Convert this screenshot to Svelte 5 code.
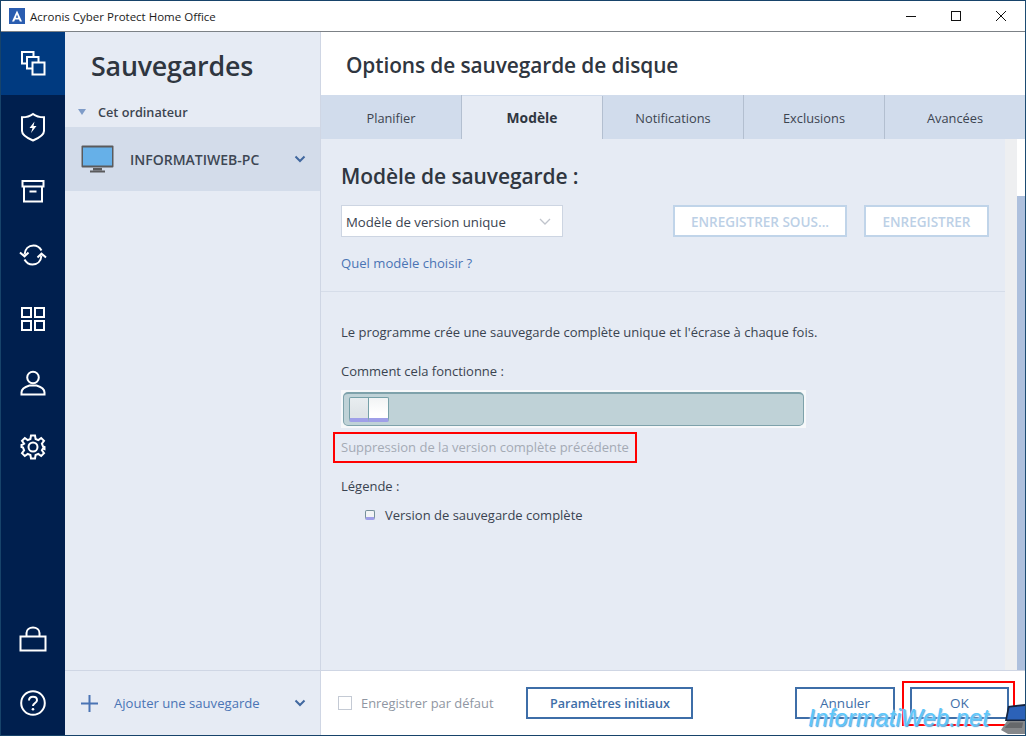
<script>
  const tabs = ["Planifier", "Modèle", "Notifications", "Exclusions", "Avancées"];
  let active = "Modèle";
</script>

<div class="window">
  <header class="titlebar">
    <svg class="logo" width="16" height="16" viewBox="0 0 16 16">
      <rect width="16" height="16" fill="#2a5db0" />
      <path d="M8 2.5 L13 13.5 H10.8 L10 11.5 H6 L5.2 13.5 H3 Z M8 6.5 L6.8 9.7 H9.2 Z" fill="#fff" fill-rule="evenodd" />
    </svg>
    <span class="app-title">Acronis Cyber Protect Home Office</span>
    <div class="win-buttons">
      <svg width="12" height="12" viewBox="0 0 12 12"><path d="M1 6.5H11" stroke="#111" /></svg>
      <svg width="12" height="12" viewBox="0 0 12 12"><rect x="1.5" y="1.5" width="9" height="9" fill="none" stroke="#111" /></svg>
      <svg width="12" height="12" viewBox="0 0 12 12"><path d="M1 1L11 11M11 1L1 11" stroke="#111" /></svg>
    </div>
  </header>

  <div class="body">
    <nav class="rail">
      <div class="rail-item current">
        <svg viewBox="0 0 26 26"><path d="M6.500 13.500H2V2H13.500V6.500M12.500 18.500H7V7H18.500V12.500" /><rect x="12.500" y="12.500" width="12" height="12" /></svg>
      </div>
      <div class="rail-item">
        <svg class="tall" viewBox="0 0 26 30"><path d="M13 2C9.500 4.800 6 5.300 2 5.300V19C2 23 7 26 13 28.500C19 26 24 23 24 19V5.300C20 5.300 16.500 4.800 13 2Z" /><path class="fill" d="M14.500 9.500L9.500 16H12.500L11 21L16.500 14H13.500Z" /></svg>
      </div>
      <div class="rail-item">
        <svg viewBox="0 0 26 26"><path d="M2.500 3H23.500V8.500H2.500ZM4 8.500V23.500H22V8.500M9.500 13.500H16.500" /></svg>
      </div>
      <div class="rail-item">
        <svg class="wide" viewBox="0 0 28 26"><path d="M5.500 12.500C6 7 9.500 3.500 14.500 3.500C18 3.500 20.500 5 22.500 8.500M22.500 13.500C22 19 18.500 22.500 13.500 22.500C10 22.500 7.500 21 5.500 17.500M1 10.500L5.500 14.500L9.500 10.500M18.500 15.500L22.500 11.500L27 15.500" /></svg>
      </div>
      <div class="rail-item">
        <svg viewBox="0 0 26 26"><rect x="2" y="2" width="9" height="9" /><rect x="15" y="2" width="9" height="9" /><rect x="2" y="15" width="9" height="9" /><rect x="15" y="15" width="9" height="9" /></svg>
      </div>
      <div class="rail-item">
        <svg viewBox="0 0 26 26"><circle cx="13" cy="7.500" r="5.800" /><path d="M1.500 24.500V22.500C1.500 18.500 6 16.500 9.500 15.500H16.500C20 16.500 24.500 18.500 24.500 22.500V24.500Z" /></svg>
      </div>
      <div class="rail-item">
        <svg viewBox="0 0 26 26"><circle cx="13" cy="13" r="4.500" /><path d="M11 1.500H15L15.600 5L18.300 6.100L21.200 4L24 6.800L21.900 9.700L23 12.400L24.500 13V15L23 14.500L21.900 16.300L24 19.200L21.200 22L18.300 19.900L15.600 21L15 24.500H11L10.400 21L7.700 19.900L4.800 22L2 19.200L4.100 16.300L3 13.600L1.500 13V11L3 10.400L4.100 9.700L2 6.800L4.800 4L7.700 6.100L10.400 5Z" /></svg>
      </div>
      <div class="rail-spacer"></div>
      <div class="rail-item">
        <svg class="wide" viewBox="0 0 28 26"><path d="M1.500 10.500H26.500V24.500H1.500ZM7.500 10.500V7C7.500 3.500 10.500 1.500 14 1.500C17.500 1.500 20.500 3.500 20.500 7V10.500" /></svg>
      </div>
      <div class="rail-item">
        <svg viewBox="0 0 26 26"><circle cx="13" cy="13" r="11.800" /><path d="M9 10.500C9 8 10.800 6.800 13 6.800C15.300 6.800 17 8.200 17 10.200C17 13 13 13 13 16" /><circle class="fill" cx="13" cy="19.300" r="1.300" /></svg>
      </div>
    </nav>

    <aside class="panel">
      <h1>Sauvegardes</h1>
      <div class="group"><span class="tri"></span>Cet ordinateur</div>
      <div class="machine">
        <svg class="monitor" width="33" height="28" viewBox="0 0 33 28">
          <rect x="0.500" y="0.500" width="32" height="22" rx="1" fill="#5a5a5c" />
          <rect x="2" y="2.500" width="29" height="18" fill="#66b0e8" />
          <rect x="12" y="23" width="9" height="2.500" fill="#5a5a5c" />
          <rect x="9" y="25.500" width="15" height="2" fill="#5a5a5c" />
        </svg>
        <span class="machine-name">INFORMATIWEB-PC</span>
        <svg class="chev" width="12" height="8" viewBox="0 0 12 8"><path d="M1.500 1.500L6 6L10.500 1.500" /></svg>
      </div>
      <div class="panel-spacer"></div>
      <div class="add">
        <svg class="plus" width="17" height="17" viewBox="0 0 17 17"><path d="M8.500 0V17M0 8.500H17" /></svg>
        <span>Ajouter une sauvegarde</span>
        <svg class="chev" width="12" height="8" viewBox="0 0 12 8"><path d="M1.500 1.500L6 6L10.500 1.500" /></svg>
      </div>
    </aside>

    <main class="main">
      <h2>Options de sauvegarde de disque</h2>
      <div class="tabs">
        {#each tabs as tab}
          <div class="tab" class:on={tab === active}>{tab}</div>
        {/each}
      </div>

      <div class="scroll-area">
        <div class="content">
          <section class="top">
            <h3>Modèle de sauvegarde :</h3>
            <div class="row">
              <div class="select">
                <span>Modèle de version unique</span>
                <svg width="12" height="7" viewBox="0 0 12 7"><path d="M1 1L6 6L11 1" /></svg>
              </div>
              <button class="ghost save-as" disabled>ENREGISTRER SOUS...</button>
              <button class="ghost save" disabled>ENREGISTRER</button>
            </div>
            <a class="link" href="#top">Quel modèle choisir ?</a>
          </section>
          <section class="desc">
            <p class="summary">Le programme crée une sauvegarde complète unique et l'écrase à chaque fois.</p>
            <p class="how">Comment cela fonctionne :</p>
            <div class="demo">
              <div class="track">
                <span class="block"></span><span class="block light"></span>
              </div>
            </div>
            <div class="caption-wrap"><span class="caption">Suppression de la version complète précédente</span></div>
            <p class="legend">Légende :</p>
            <div class="legend-row"><span class="swatch"></span>Version de sauvegarde complète</div>
          </section>
        </div>
        <div class="gutter"></div>
        <div class="scrollbar"><div class="thumb"></div></div>
      </div>

      <footer class="footer">
        <span class="check"></span>
        <span class="check-label">Enregistrer par défaut</span>
        <button class="outline initial">Paramètres initiaux</button>
        <div class="footer-spacer"></div>
        <button class="outline cancel">Annuler</button>
        <button class="outline ok">OK</button>
      </footer>
    </main>
  </div>

  <!-- annotations over the screenshot -->
  <div class="mark-ok"></div>
  <div class="watermark">InformatiWeb.net</div>
  <svg class="laptop" width="24" height="31" viewBox="0 0 24 31">
    <path d="M7 2L24 0V17H4Z" fill="#15243f" />
    <path d="M8.500 3.500L24 2V15.500H6Z" fill="#2c62b8" />
    <path d="M0 26L6 17H24V30H7Z" fill="#85878a" />
    <path d="M5 22L9 18.500H22L21 24H4Z" fill="#66686b" />
  </svg>
</div>

<style>
  :global(body) {
    margin: 0;
    background: #fff;
  }

  .window {
    position: relative;
    width: 1026px;
    height: 736px;
    box-sizing: border-box;
    border: 1px solid #17436a;
    border-right-color: #1d4c72;
    display: flex;
    flex-direction: column;
    overflow: hidden;
    font-family: "Open Sans", "Noto Sans", sans-serif;
    color: #2f3640;
  }

  .titlebar {
    height: 30px;
    flex: none;
    box-sizing: content-box;
    display: flex;
    align-items: center;
    padding-left: 8px;
    background: #fff;
    border-bottom: 1px solid #7c8186;
    margin-bottom: -1px;
    position: relative;
  }

  .logo {
    margin-right: 5px;
  }

  .app-title {
    font-size: 11.500px;
    color: #1c1c1c;
  }

  .win-buttons {
    margin-left: auto;
    display: flex;
    gap: 33px;
    margin-right: 18px;
  }

  .body {
    flex: 1;
    display: flex;
    min-height: 0;
  }

  .rail {
    width: 64px;
    flex: none;
    display: flex;
    flex-direction: column;
    background: #001f4e;
  }

  .rail-item {
    height: 64px;
    flex: none;
    display: flex;
    align-items: center;
    justify-content: center;
  }

  .rail-item.current {
    background: #003a80;
  }

  .rail-item svg {
    width: 26px;
    height: 26px;
    fill: none;
    stroke: #fff;
    stroke-width: 2;
  }

  .rail-item svg.tall {
    height: 30px;
  }

  .rail-item svg.wide {
    width: 28px;
  }

  .rail-item svg .fill {
    fill: #fff;
    stroke: none;
  }

  .rail-spacer {
    flex: 1;
  }

  .panel {
    width: 255px;
    flex: none;
    display: flex;
    flex-direction: column;
    background: #e6ebf4;
    border-right: 1px solid #cfd6e4;
  }

  .panel h1 {
    margin: 0;
    height: 63px;
    padding-left: 26px;
    line-height: 70px;
    font-size: 26.800px;
    font-weight: 600;
    color: #2f3640;
    letter-spacing: -0.2px;
  }

  .group {
    height: 33px;
    display: flex;
    align-items: center;
    font-size: 12.700px;
    font-weight: 600;
    color: #3c4450;
    padding: 2px 0 0 13px;
    box-sizing: border-box;
  }

  .tri {
    width: 0;
    height: 0;
    border-left: 4.500px solid transparent;
    border-right: 4.500px solid transparent;
    border-top: 6px solid #7f9cc8;
    margin-right: 12px;
  }

  .machine {
    height: 64px;
    flex: none;
    display: flex;
    align-items: center;
    background: #d3dcea;
    padding-left: 16px;
  }

  .machine-name {
    margin-left: 16px;
    font-size: 14px;
    font-weight: 600;
    color: #3e4754;
  }

  .chev {
    margin-left: auto;
    margin-right: 14px;
    fill: none;
    stroke: #41689f;
    stroke-width: 2;
  }

  .panel-spacer {
    flex: 1;
  }

  .add {
    height: 65px;
    flex: none;
    box-sizing: border-box;
    display: flex;
    align-items: center;
    border-top: 1px solid #cfd6e4;
    padding-left: 16px;
    font-size: 13.100px;
    color: #4a74b4;
  }

  .plus {
    margin-right: 16px;
    stroke: #4a74b4;
    stroke-width: 2;
  }

  .main {
    flex: 1;
    min-width: 0;
    display: flex;
    flex-direction: column;
    background: #fff;
  }

  .main h2 {
    margin: 0;
    height: 64px;
    flex: none;
    padding-left: 25px;
    line-height: 68px;
    font-size: 20.900px;
    font-weight: 600;
    color: #2f3640;
    letter-spacing: -0.1px;
  }

  .tabs {
    height: 44px;
    flex: none;
    display: flex;
    background: #d1dcec;
  }

  .tab {
    flex: 1;
    display: flex;
    align-items: center;
    justify-content: center;
    padding-top: 1px;
    font-size: 12.800px;
    color: #3c4450;
    border-right: 1px solid #b3bfd0;
  }

  .tab:first-child {
    flex: 0 0 140px;
  }

  .tab:last-child {
    border-right: none;
  }

  .tab.on {
    background: #e6ebf4;
    font-size: 13.800px;
    font-weight: 700;
    color: #2f3640;
    border-left: 1px solid #b3bfd0;
    margin-left: -1px;
    margin-top: 1px;
    padding-top: 0;
  }

  .scroll-area {
    flex: 1;
    display: flex;
    min-height: 0;
    background: #e6ebf4;
  }

  .content {
    flex: 1;
    min-width: 0;
    display: flex;
    flex-direction: column;
  }

  .gutter {
    width: 12px;
    background: #eeeff1;
  }

  .scrollbar {
    width: 8px;
    background: #fff;
    padding-top: 57px;
    display: flex;
  }

  .thumb {
    flex: 1;
    background: #aec0dd;
  }

  .top {
    height: 153px;
    flex: none;
    box-sizing: border-box;
    padding: 22px 0 0 20px;
    border-bottom: 1px solid #d6dde9;
  }

  .top h3 {
    margin: 0 0 14px;
    font-size: 21px;
    line-height: 30px;
    font-weight: 600;
    color: #2f3640;
    letter-spacing: -0.1px;
  }

  .row {
    display: flex;
    align-items: center;
    height: 32px;
  }

  .select {
    width: 222px;
    height: 32px;
    box-sizing: border-box;
    display: flex;
    align-items: center;
    justify-content: space-between;
    padding: 1px 11px 0 4px;
    background: #fff;
    border: 1px solid #cdd5e2;
    font-size: 13.200px;
    color: #3a4350;
  }

  .select svg {
    fill: none;
    stroke: #c0c4cc;
    stroke-width: 1.300;
  }

  .ghost {
    height: 32px;
    box-sizing: border-box;
    background: #fff;
    border: 2px solid #c0d4e9;
    font-family: inherit;
    font-size: 13.500px;
    font-weight: 600;
    color: #bcd0e6;
    padding: 1px 0 0;
  }

  .save-as {
    width: 174px;
    margin-left: 110px;
  }

  .save {
    width: 125px;
    margin-left: 17px;
  }

  .link {
    display: block;
    margin-top: 17px;
    font-size: 13.100px;
    line-height: 18px;
    color: #4a74b4;
    text-decoration: none;
  }

  .desc {
    flex: 1;
    padding: 31px 0 0 20px;
  }

  .desc p {
    margin: 0;
    font-size: 13px;
    line-height: 18px;
    color: #3a4350;
  }

  .desc p.how {
    padding-top: 21px;
  }

  .demo {
    width: 465px;
    height: 38px;
    margin-top: 10px;
    box-sizing: border-box;
    padding: 2px;
    background: #f6f8fa;
  }

  .track {
    height: 34px;
    box-sizing: border-box;
    padding: 3px 0 0 5px;
    display: flex;
    align-items: flex-start;
    background: #bfd2d7;
    border: 1px solid #7ea2ab;
    border-top-width: 2px;
    border-radius: 5px;
  }

  .block {
    width: 20px;
    height: 25px;
    box-sizing: border-box;
    background: linear-gradient(#e8edf0, #dfe4e8 80%);
    border: 1px solid #76a0a8;
    border-bottom: 4px solid #9f9fe8;
    border-radius: 2px 0 0 2px;
  }

  .block.light {
    background: linear-gradient(#f2f4f5, #ffffff 80%);
    border-left: none;
    border-radius: 0 2px 2px 0;
  }

  .caption-wrap {
    position: relative;
    margin-top: 4px;
    height: 31px;
    padding-bottom: 1px;
    box-sizing: border-box;
    display: flex;
    align-items: center;
  }

  .caption {
    font-size: 13px;
    color: #a4aab4;
  }

  .caption-wrap::after {
    content: "";
    position: absolute;
    left: -8px;
    top: 0;
    width: 300px;
    height: 27px;
    border: 2px solid #f00;
  }

  .desc p.legend {
    padding-top: 14px;
  }

  .legend-row {
    display: flex;
    align-items: center;
    margin-top: 11px;
    padding-left: 24px;
    font-size: 13px;
    line-height: 18px;
    color: #3a4350;
  }

  .swatch {
    width: 10px;
    height: 10px;
    box-sizing: border-box;
    margin-right: 10px;
    border: 1px solid #76909a;
    border-bottom: 3px solid #9f9fe8;
    border-radius: 2px;
    background: #f2f4f5;
  }

  .footer {
    height: 65px;
    flex: none;
    box-sizing: border-box;
    display: flex;
    align-items: center;
    padding: 0 16px 0 17px;
    background: #fff;
    border-top: 1px solid #cfd6e4;
  }

  .check {
    width: 14px;
    height: 14px;
    box-sizing: border-box;
    border: 1px solid #c4cad4;
    background: #fff;
  }

  .check-label {
    margin-left: 9px;
    font-size: 12.900px;
    color: #8f96a2;
  }

  .outline {
    height: 32px;
    box-sizing: border-box;
    background: #fff;
    border: 2px solid #3e6ea8;
    font-family: inherit;
    font-size: 13.500px;
    color: #3e6ea8;
    padding: 0;
  }

  .initial {
    width: 167px;
    margin-left: 33px;
    font-size: 12.600px;
    font-weight: 600;
  }

  .footer-spacer {
    flex: 1;
  }

  .cancel {
    width: 100px;
  }

  .ok {
    width: 99px;
    margin-left: 15px;
  }

  .mark-ok {
    position: absolute;
    left: 901px;
    top: 680px;
    width: 109px;
    height: 41px;
    border: 2px solid #f00;
  }

  .watermark {
    position: absolute;
    left: 807px;
    top: 702px;
    font-family: "Liberation Sans", sans-serif;
    font-size: 23.400px;
    font-style: italic;
    line-height: 30px;
    color: #5cc6fa;
    text-shadow: 0 0 2px #fff, 1px 1px 1px #2a8fd8;
    letter-spacing: 0.2px;
  }

  .laptop {
    position: absolute;
    right: 0;
    bottom: 0;
  }
</style>
